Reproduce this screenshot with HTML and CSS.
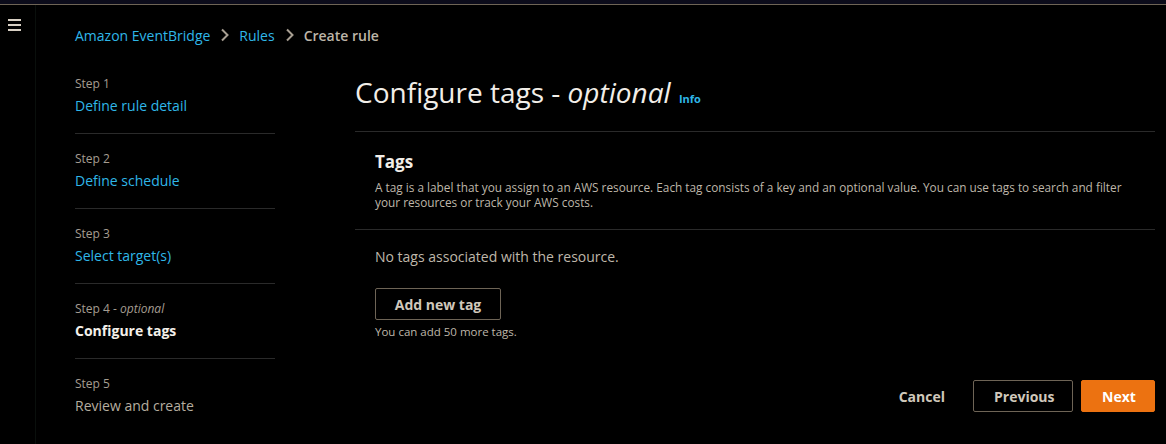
FILE: index.html
```html
<!DOCTYPE html>
<html>
<head>
<meta charset="utf-8">
<link rel="stylesheet" href="styles.css">
</head>
<body>
<div class="topstrip"></div>
<div class="app">
  <div class="rail">
    <svg class="burger" width="16" height="14" viewBox="0 0 16 14"><rect x="1" y="2" width="13" height="2" fill="#d8d0c4"/><rect x="1" y="7" width="13" height="2" fill="#d8d0c4"/><rect x="1" y="12" width="13" height="2" fill="#d8d0c4"/></svg>
  </div>
  <div class="main">
    <nav class="crumbs">
      <a class="link">Amazon EventBridge</a>
      <svg class="chev" width="10" height="14" viewBox="0 0 10 14"><path d="M2 1.5 L7.5 7 L2 12.5" fill="none" stroke="#a89f92" stroke-width="2"/></svg>
      <a class="link">Rules</a>
      <svg class="chev" width="10" height="14" viewBox="0 0 10 14"><path d="M2 1.5 L7.5 7 L2 12.5" fill="none" stroke="#a89f92" stroke-width="2"/></svg>
      <span class="current">Create rule</span>
    </nav>
    <div class="layout">
      <ul class="steps">
        <li class="step"><div class="steplabel">Step 1</div><a class="link steptitle">Define rule detail</a></li>
        <li class="step"><div class="steplabel">Step 2</div><a class="link steptitle">Define schedule</a></li>
        <li class="step"><div class="steplabel">Step 3</div><a class="link steptitle">Select target(s)</a></li>
        <li class="step"><div class="steplabel">Step 4 - <i>optional</i></div><div class="steptitle active">Configure tags</div></li>
        <li class="step last"><div class="steplabel">Step 5</div><div class="steptitle disabled">Review and create</div></li>
      </ul>
      <div class="content">
        <h1 class="title">Configure tags - <i>optional</i> <a class="info">Info</a></h1>
        <section class="panel">
          <header class="panelhead">
            <h2>Tags</h2>
            <p>A tag is a label that you assign to an AWS resource. Each tag consists of a key and an optional value. You can use tags to search and filter your resources or track your AWS costs.</p>
          </header>
          <div class="panelbody">
            <p class="empty">No tags associated with the resource.</p>
            <button class="btn">Add new tag</button>
            <p class="hint">You can add 50 more tags.</p>
          </div>
        </section>
        <div class="actions">
          <button class="btn-link">Cancel</button>
          <button class="btn wide">Previous</button>
          <button class="btn primary">Next</button>
        </div>
      </div>
    </div>
  </div>
</div>
</body>
</html>
```

FILE: styles.css
```css
* { box-sizing: border-box; }
html, body { margin: 0; padding: 0; background: #000; }
body {
  font-family: "Open Sans", "Noto Sans", sans-serif;
  color: #cfc7bb;
  width: 1166px;
  height: 444px;
  overflow: hidden;
}
.topstrip {
  height: 5px;
  background: #0b0b1a;
  border-bottom: 1px solid #6e6456;
}
.app { display: flex; height: 439px; }
.rail {
  width: 36px;
  border-right: 1px solid #0a0f0c;
  padding: 12px 0 0 7px;
}
.burger { display: block; }
.main { flex: 1; padding-left: 39px; }
.crumbs {
  display: flex;
  align-items: center;
  height: 20px;
  margin-top: 20px;
  font-size: 14px;
}
.link { color: #2fb7e8; text-decoration: none; }
.chev { margin: 0 9px 0 10px; }
.current { color: #bdb5a8; font-weight: 600; }
.layout { display: flex; margin-top: 28px; }
.steps {
  list-style: none;
  margin: 0;
  padding: 0;
  width: 200px;
}
.step {
  border-bottom: 1px solid #2a2a2a;
  padding: 17px 0 17px;
  height: 75px;
}
.step:first-child { padding-top: 3px; height: 61px; }
.step.last { border-bottom: none; }
.steplabel { font-size: 12px; color: #a59d91; line-height: 16px; }
.steptitle { display: block; font-size: 14px; line-height: 20px; margin-top: 4px; }
.steptitle.active { color: #f4f0ea; font-weight: 700; }
.steptitle.disabled { color: #b5ad9f; }
.content { flex: 1; margin-left: 80px; margin-right: 11px; }
.title {
  margin: 0;
  font-size: 28px;
  font-weight: 400;
  color: #f2eee8;
  line-height: 32px;
  height: 58px;
  padding-top: 3px;
}
.title i { font-weight: 400; }
.info {
  font-size: 11px;
  font-weight: 700;
  font-style: normal;
  color: #2fb7e8;
  margin-left: 1px;
}
.panel { border-top: 1px solid #2a2a2a; }
.panelhead {
  padding: 19px 20px 19px;
  border-bottom: 1px solid #2a2a2a;
}
.panelhead h2 {
  margin: 0;
  font-size: 17px;
  font-weight: 700;
  color: #f2eee8;
  line-height: 22px;
}
.panelhead p {
  margin: 7px 0 0;
  font-size: 11.8px;
  line-height: 15px;
  color: #bfb7aa;
}
.panelbody { padding: 17px 20px 0; }
.empty { margin: 0; font-size: 14px; line-height: 20px; color: #bfb7aa; }
.btn {
  font-family: inherit;
  background: #000;
  border: 1px solid #6e6456;
  border-radius: 2px;
  color: #d0c8bb;
  font-size: 14px;
  font-weight: 700;
  height: 32px;
  padding: 0 20px;
  white-space: nowrap;
  cursor: pointer;
}
.panelbody .btn { display: block; margin-top: 21px; width: 126px; padding: 0; }
.hint { margin: 4px 0 0; font-size: 11.5px; line-height: 16px; color: #bfb7aa; }
.actions {
  display: flex;
  justify-content: flex-end;
  align-items: center;
  gap: 8px;
  margin-top: 40px;
}
.btn-link {
  font-family: inherit;
  background: none;
  border: none;
  color: #d0c8bb;
  font-size: 14px;
  font-weight: 700;
  margin-right: 20px;
  padding: 0;
}
.btn.wide { width: 100px; }
.btn.primary {
  background: #ec7211;
  border-color: #ec7211;
  color: #fff;
  width: 74px;
}
```
